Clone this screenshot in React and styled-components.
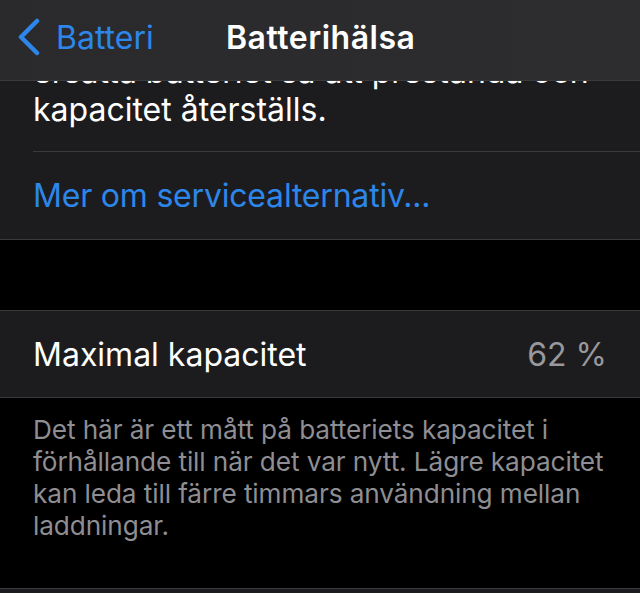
import React from "react";
import styled, { createGlobalStyle } from "styled-components";

const Global = createGlobalStyle`
  html, body { margin: 0; padding: 0; background: #000; }
  body { font-family: Inter, "Noto Sans", "Liberation Sans", sans-serif; -webkit-font-smoothing: antialiased; }
`;

const Screen = styled.div`
  width: 640px;
  height: 593px;
  overflow: hidden;
  background: #000;
  display: flex;
  flex-direction: column;
`;

const Nav = styled.header`
  flex: 0 0 auto;
  height: 81px;
  box-sizing: border-box;
  background: linear-gradient(90deg, #2a2a2c 0%, #2d2d2f 100%);
  border-bottom: 1px solid #3a3a3c;
  display: flex;
  align-items: center;
  padding: 0 0 6px 16px;
`;

const Back = styled.div`
  display: flex;
  align-items: center;
  gap: 14px;
  color: #2d87ea;
  font-size: 32px;
  letter-spacing: 0;
  width: 210px;
`;

const Title = styled.div`
  color: #fff;
  font-size: 32px;
  font-weight: 600;
  letter-spacing: 0.5px;
`;

const Content = styled.main`
  display: flex;
  flex-direction: column;
`;

const Group = styled.section`
  background: #1c1c1e;
  border-top: ${(p) => (p.$top ? "1px solid #3a3a3c" : "none")};
  border-bottom: 1px solid #3a3a3c;
`;

const ClippedLine = styled.div`
  height: 10px;
  overflow: hidden;
  display: flex;
  align-items: flex-end;
  padding: 0 33px;
  color: #fff;
  font-size: 32px;
  line-height: 38px;
  white-space: nowrap;
`;

const Paragraph = styled.p`
  margin: 0;
  padding: 0 33px 22px 33px;
  color: #fff;
  font-size: 32px;
  line-height: 38px;
  letter-spacing: 0;
`;

const Separator = styled.div`
  height: 1px;
  margin-left: 33px;
  background: #3a3a3c;
`;

const Row = styled.div`
  height: ${(p) => p.$h}px;
  display: flex;
  align-items: center;
  justify-content: space-between;
  padding: 0 33px;
  font-size: 32px;
  letter-spacing: ${(p) => (p.$link ? "-0.2px" : "0")};
  color: ${(p) => (p.$link ? "#2d87ea" : "#fff")};
`;

const Value = styled.span`
  color: #98989d;
`;

const Spacer = styled.div`
  height: 70px;
`;

const Footer = styled.p`
  margin: 0;
  padding: 16px 18px 46px 33px;
  color: #8e8e93;
  font-size: 26.2px;
  line-height: 32px;
  letter-spacing: -0.1px;
`;

const Chevron = () => (
  <svg width="26" height="38" viewBox="0 0 26 38" aria-hidden="true">
    <path d="M21 3 L5 19 L21 35" fill="none" stroke="#2d87ea" strokeWidth="4.5" strokeLinecap="round" strokeLinejoin="round" />
  </svg>
);

export default function App() {
  return (
    <Screen>
      <Global />
      <Nav>
        <Back>
          <Chevron />
          <span>Batteri</span>
        </Back>
        <Title>Batterihälsa</Title>
      </Nav>
      <Content>
        <Group>
          <ClippedLine>
            <span>ersätta batteriet så att prestanda och</span>
          </ClippedLine>
          <Paragraph>kapacitet återställs.</Paragraph>
          <Separator />
          <Row $h={87} $link>Mer om servicealternativ...</Row>
        </Group>
        <Spacer />
        <Group $top>
          <Row $h={86}>
            <span>Maximal kapacitet</span>
            <Value>62 %</Value>
          </Row>
        </Group>
        <Footer>
          Det här är ett mått på batteriets kapacitet i förhållande till när det var nytt. Lägre kapacitet kan leda till färre timmars användning mellan laddningar.
        </Footer>
        <Group $top>
          <Row $h={87} />
        </Group>
      </Content>
    </Screen>
  );
}
